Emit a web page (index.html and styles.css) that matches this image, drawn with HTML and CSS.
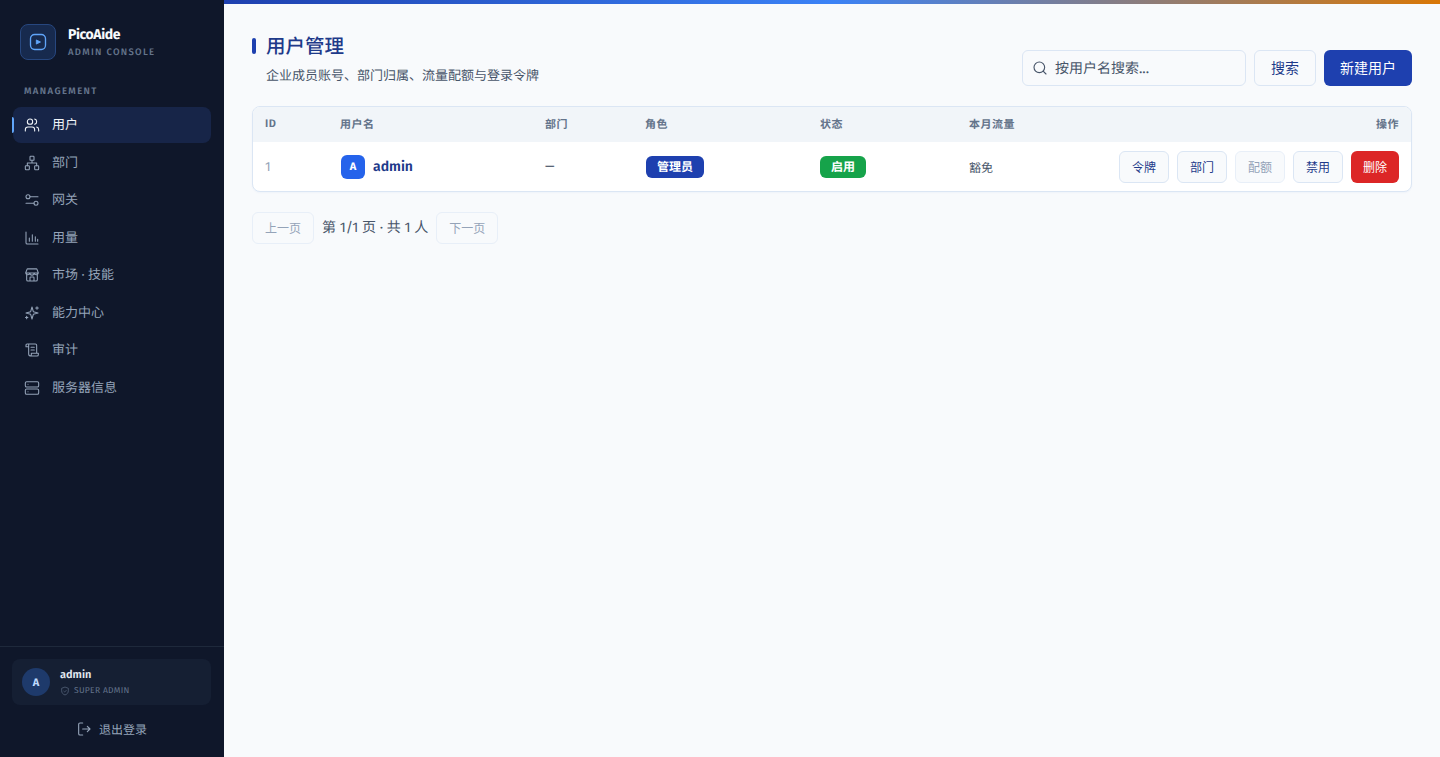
FILE: index.html
```html
<!DOCTYPE html>
<html lang="zh-CN">
<head>
<meta charset="utf-8">
<title>用户管理</title>
<link rel="stylesheet" href="styles.css">
</head>
<body>
<div class="app">
  <aside class="sidebar">
    <div class="brand">
      <div class="logo"><svg width="20" height="20" viewBox="0 0 24 24" fill="none" stroke="#60a5fa" stroke-width="1.6"><rect x="3" y="3" width="18" height="18" rx="5"/><path d="M10 9.5 15 12l-5 2.5z" fill="#60a5fa" stroke-width="1"/></svg></div>
      <div>
        <div class="brand-name">PicoAide</div>
        <div class="brand-sub">ADMIN CONSOLE</div>
      </div>
    </div>
    <div class="nav-label">MANAGEMENT</div>
    <nav class="nav">
      <a class="nav-item active"><svg class="nav-icon" viewBox="0 0 24 24"><path d="M16 21v-2a4 4 0 0 0-4-4H6a4 4 0 0 0-4 4v2M16 3.130a4 4 0 0 1 0 7.750M22 21v-2a4 4 0 0 0-3-3.870"/><circle cx="9" cy="7" r="4"/></svg><span>用户</span></a>
      <a class="nav-item"><svg class="nav-icon" viewBox="0 0 24 24"><rect x="9" y="2" width="6" height="6" rx="1"/><rect x="2" y="16" width="6" height="6" rx="1"/><rect x="16" y="16" width="6" height="6" rx="1"/><path d="M12 8v4M5 16v-4h14v4"/></svg><span>部门</span></a>
      <a class="nav-item"><svg class="nav-icon" viewBox="0 0 24 24"><circle cx="6" cy="7" r="3"/><circle cx="18" cy="17" r="3"/><path d="M9 7h12M3 17h12"/></svg><span>网关</span></a>
      <a class="nav-item"><svg class="nav-icon" viewBox="0 0 24 24"><path d="M3 3v16a2 2 0 0 0 2 2h16M8 17v-5M12.500 17V7M17 17v-7M20.500 17v-3"/></svg><span>用量</span></a>
      <a class="nav-item"><svg class="nav-icon" viewBox="0 0 24 24"><path d="M4 10v9a2 2 0 0 0 2 2h12a2 2 0 0 0 2-2v-9M2.500 9l2-5.500a1 1 0 0 1 1-.7h13a1 1 0 0 1 1 .7l2 5.500M2.500 9a3.200 3.200 0 0 0 6.300 0 3.200 3.200 0 0 0 6.400 0 3.200 3.200 0 0 0 6.300 0M2.500 9h19M9 21v-5a1 1 0 0 1 1-1h4a1 1 0 0 1 1 1v5"/></svg><span>市场 · 技能</span></a>
      <a class="nav-item"><svg class="nav-icon" viewBox="0 0 24 24"><path d="m12 3 2 7 7 2-7 2-2 7-2-7-7-2 7-2zM19.500 2.500v4M17.500 4.500h4M4 17v3.500M2.300 18.700h3.500"/></svg><span>能力中心</span></a>
      <a class="nav-item"><svg class="nav-icon" viewBox="0 0 24 24"><path d="M7 3H4.500A1.500 1.500 0 0 0 3 4.500V7h4M7 3h10a2 2 0 0 1 2 2v11M7 3v15a3 3 0 0 0 3 3h9.500a2 2 0 0 0 2-2v-2H11v2a2 2 0 0 1-2 2M10.500 8h5M10.500 12h5"/></svg><span>审计</span></a>
      <a class="nav-item"><svg class="nav-icon" viewBox="0 0 24 24"><rect x="2" y="2.500" width="20" height="8" rx="2"/><rect x="2" y="13.500" width="20" height="8" rx="2"/><path d="M6 6.500h.01M6 17.500h.01"/></svg><span>服务器信息</span></a>
    </nav>
    <div class="side-foot">
      <div class="user-card">
        <div class="user-avatar">A</div>
        <div>
          <div class="user-name">admin</div>
          <div class="user-role"><svg class="shield" viewBox="0 0 24 24"><path d="M12 2.500 20 5.500v6c0 5-3.400 8.600-8 10-4.600-1.400-8-5-8-10v-6z"/><path d="m8.500 12 2.500 2.500 4.500-4.500"/></svg>SUPER ADMIN</div>
        </div>
      </div>
      <a class="logout"><svg class="logout-icon" viewBox="0 0 24 24"><path d="M10 3H6a2 2 0 0 0-2 2v14a2 2 0 0 0 2 2h4M10 12h11M17 8l4 4-4 4"/></svg>退出登录</a>
    </div>
  </aside>
  <main class="main">
    <div class="topbar"></div>
    <div class="content">
      <header class="page-head">
        <div>
          <h1 class="title">用户管理</h1>
          <p class="subtitle">企业成员账号、部门归属、流量配额与登录令牌</p>
        </div>
        <div class="tools">
          <label class="search"><svg class="search-icon" viewBox="0 0 24 24"><circle cx="11" cy="11" r="8"/><path d="m21 21-4.300-4.300"/></svg><span>按用户名搜索...</span></label>
          <button class="btn">搜索</button>
          <button class="btn primary">新建用户</button>
        </div>
      </header>
      <div class="table-wrap">
        <table class="table">
          <thead>
            <tr>
              <th class="c-id">ID</th><th class="c-user">用户名</th><th class="c-dept">部门</th><th class="c-role">角色</th><th class="c-status">状态</th><th class="c-traffic">本月流量</th><th class="c-act">操作</th>
            </tr>
          </thead>
          <tbody>
            <tr>
              <td class="id-cell">1</td>
              <td><div class="user-cell"><span class="mini-avatar">A</span><span class="uname">admin</span></div></td>
              <td>—</td>
              <td><span class="badge blue">管理员</span></td>
              <td><span class="badge green">启用</span></td>
              <td class="traffic">豁免</td>
              <td><div class="actions"><button class="sm">令牌</button><button class="sm">部门</button><button class="sm off">配额</button><button class="sm">禁用</button><button class="sm danger">删除</button></div></td>
            </tr>
          </tbody>
        </table>
      </div>
      <div class="pager">
        <button class="pg">上一页</button>
        <span class="pg-text">第 1/1 页 · 共 1 人</span>
        <button class="pg">下一页</button>
      </div>
    </div>
  </main>
</div>
</body>
</html>
```
FILE: styles.css
```css
* { box-sizing: border-box; }
html, body { margin: 0; height: 100%; }
body {
  font-family: "Fira Sans", "Noto Sans CJK SC", sans-serif;
  text-rendering: geometricPrecision;
  background: #f8fafc;
  color: #1e293b;
  overflow: hidden;
}
.app { display: flex; height: 757px; }
.sidebar {
  width: 224px;
  flex: none;
  background: #0f172a;
  display: flex;
  flex-direction: column;
}
.brand { display: flex; align-items: center; gap: 12px; padding: 24px 20px 0; }
.logo {
  width: 36px; height: 36px; border-radius: 8px;
  background: #172a4e; border: 1px solid #27477f;
  display: flex; align-items: center; justify-content: center;
}
.brand-name { font-size: 14px; font-weight: 700; color: #f8fafc; line-height: 20px; letter-spacing: -0.4px; }
.brand-sub { font-size: 9.500px; color: #64748b; letter-spacing: 1.300px; line-height: 14px; font-weight: 500; }
.nav-label { font-size: 9.500px; font-weight: 600; color: #64748b; letter-spacing: 1.400px; padding: 24px 24px 0; line-height: 14px; }
.nav { display: flex; flex-direction: column; gap: 1.500px; padding: 9px 12px 0 13px; }
.nav-item {
  position: relative;
  display: flex; align-items: center; gap: 12px;
  height: 36px; padding: 0 11px;
  border-radius: 8px;
  font-size: 13px; color: #94a3b8;
  width: 198px;
}
.nav-item span { line-height: 18px; padding-top: 2px; }
.nav-item.active { background: #172548; color: #f1f5f9; }
.nav-item.active::before {
  content: ""; position: absolute; left: -1px; top: 10px; width: 2px; height: 16px;
  background: #60a5fa; border-radius: 0 2px 2px 0;
}
.nav-icon { width: 16px; height: 16px; fill: none; stroke: currentColor; stroke-width: 1.600; stroke-linecap: round; stroke-linejoin: round; flex: none; }
.side-foot { margin-top: auto; border-top: 1px solid #1e293b; padding: 12px 12px 0; height: 111px; }
.user-card {
  display: flex; align-items: center; gap: 10px;
  height: 46px; width: 199px; padding: 0 10px;
  background: #151f33; border-radius: 8px;
}
.user-avatar {
  width: 28px; height: 28px; border-radius: 50%;
  background: #1e3a6b; color: #bfdbfe;
  font-size: 11px; font-weight: 700;
  display: flex; align-items: center; justify-content: center;
}
.user-name { font-size: 11px; font-weight: 600; color: #e2e8f0; line-height: 14px; }
.user-role { display: flex; align-items: center; gap: 4px; font-size: 8.500px; color: #64748b; line-height: 12px; margin-top: 3px; letter-spacing: 0.3px; }
.shield { width: 10px; height: 10px; fill: none; stroke: #64748b; stroke-width: 1.500; }
.logout {
  display: flex; align-items: center; justify-content: center; gap: 7px;
  margin-top: 14px; height: 20px; padding-right: 1px;
  font-size: 12px; color: #94a3b8;
}
.logout-icon { width: 16px; height: 16px; fill: none; stroke: #94a3b8; stroke-width: 1.700; stroke-linecap: round; stroke-linejoin: round; }
.main { flex: 1; min-width: 0; display: flex; flex-direction: column; }
.topbar { height: 4px; background: linear-gradient(90deg, #1e40af 0%, #3b82f6 50%, #d97706 100%); }
.content { padding: 28px 28px 0; }
.page-head { display: flex; justify-content: space-between; align-items: flex-start; margin-bottom: 20px; height: 54px; }
.title {
  position: relative; margin: 0; padding-left: 14px;
  font-size: 19.500px; font-weight: 500; color: #1e3a8a; line-height: 32px;
}
.title::before {
  content: ""; position: absolute; left: 0; top: 6px; width: 4px; height: 16px;
  background: #1e40af; border-radius: 2px;
}
.subtitle { margin: 3px 0 0; padding-left: 14px; font-size: 13px; color: #475569; line-height: 19px; }
.tools { display: flex; gap: 8px; align-self: flex-end; }
.search {
  width: 224px; height: 36px; display: flex; align-items: center; gap: 7px; padding: 0 9px;
  background: #f8fafc; border: 1px solid #dbe6f4; border-radius: 6px;
  font-size: 14px; color: #475569;
}
.search-icon { width: 16px; height: 16px; fill: none; stroke: #475569; stroke-width: 1.700; stroke-linecap: round; flex: none; }
.btn {
  height: 36px; padding: 0 16px 3px;
  background: #f8fafc; border: 1px solid #dbe6f4; border-radius: 6px;
  font: inherit; font-size: 14px; color: #1e3a8a;
}
.btn.primary { background: #1e40af; border: 0; color: #fff; }
.table-wrap {
  background: #fff; border: 1px solid #dbe6f4; border-radius: 8px; overflow: hidden;
  box-shadow: 0 1px 2px rgba(30, 64, 175, 0.04);
}
.table { width: 100%; border-collapse: collapse; table-layout: fixed; }
th {
  height: 35px; padding: 0 12px 2px; text-align: left;
  background: #f1f5f9; color: #64748b;
  font-size: 11px; font-weight: 600; letter-spacing: 0.5px;
}
td { height: 49px; padding: 0 12px; font-size: 12px; color: #334155; }
.c-id { width: 75px; }
.c-user { width: 205px; }
.c-dept { width: 100px; }
.c-role { width: 175px; }
.c-status { width: 149px; }
.c-traffic { width: 120px; }
.c-act { text-align: right; }
.id-cell { color: #94a3b8; font-size: 13px; padding-top: 2px; }
.traffic { color: #475569; padding-top: 2px; }
.user-cell { display: flex; align-items: center; gap: 8px; margin-left: 1px; }
.mini-avatar {
  width: 24px; height: 24px; border-radius: 6px; background: #2563eb; color: #fff;
  font-size: 11px; font-weight: 700;
  display: flex; align-items: center; justify-content: center;
}
.uname { font-size: 14px; font-weight: 600; color: #1e3a8a; line-height: 20px; }
.badge {
  display: inline-block; padding: 0 11px; height: 22px; line-height: 24px;
  border-radius: 6px; color: #fff; font-size: 12px; font-weight: 600; margin-left: 1px;
}
.badge.blue { background: #1e40af; }
.badge.green { background: #16a34a; margin-left: 0; }
.actions { display: flex; justify-content: flex-end; gap: 8px; }
.sm {
  height: 32px; padding: 0 12px;
  background: #f8fafc; border: 1px solid #dbe6f4; border-radius: 6px;
  font: inherit; font-size: 12px; color: #1e3a8a;
}
.sm.off { color: #94a3b8; border-color: #e8eff8; }
.sm.danger { background: #dc2626; border: 0; color: #fff; }
.pager { display: flex; align-items: center; gap: 8px; margin-top: 20px; }
.pg {
  height: 32px; padding: 0 12px 2px;
  background: #f8fafc; border: 1px solid #e8eff8; border-radius: 6px;
  font: inherit; font-size: 12px; color: #94a3b8;
}
.pg-text { font-size: 14px; color: #475569; padding-bottom: 2px; }
```
